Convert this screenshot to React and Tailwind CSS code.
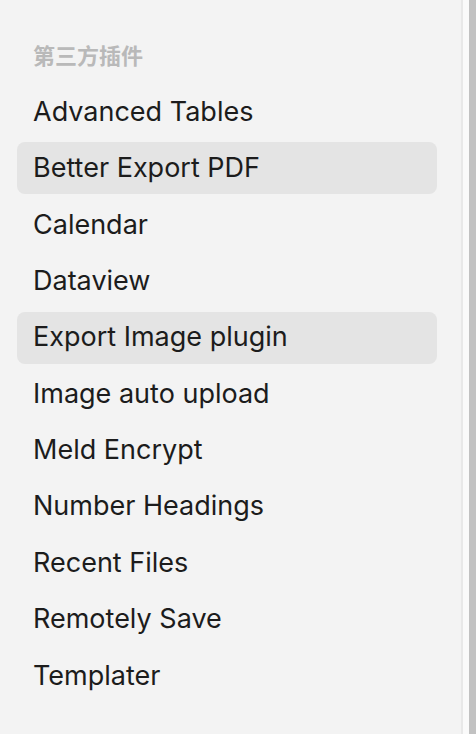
import React from 'react';

const plugins = [
    'Advanced Tables',
    'Better Export PDF',
    'Calendar',
    'Dataview',
    'Export Image plugin',
    'Image auto upload',
    'Meld Encrypt',
    'Number Headings',
    'Recent Files',
    'Remotely Save',
    'Templater',
];

const active = ['Better Export PDF', 'Export Image plugin'];

export default function App() {
    return (
        <div
            className="flex h-[734px] w-[476px] overflow-hidden bg-[#f3f3f3]"
            style={{ fontFamily: 'Inter, "Noto Sans CJK SC", sans-serif' }}
        >
            <div className="flex-1 border-r-2 border-[#e8e8e8] pl-[17px] pr-[24px]">
                <div className="mt-[44px] mb-[18px] h-[24px] pl-4 text-[22px] leading-[24px] font-bold text-[#b9b9b9]">
                    第三方插件
                </div>
                <div className="flex flex-col gap-[4.4px]">
                    {plugins.map((name) => (
                        <div
                            key={name}
                            className={`flex h-[52px] items-center rounded-lg pl-4 text-[27px] text-[#1c1c1c] ${
                                active.includes(name) ? 'bg-[#e4e4e4]' : ''
                            }`}
                        >
                            {name}
                        </div>
                    ))}
                </div>
            </div>
            <div className="w-[6px] bg-[#fafafa]" />
            <div className="w-[7px] bg-[#c2c2c2]" />
        </div>
    );
}
